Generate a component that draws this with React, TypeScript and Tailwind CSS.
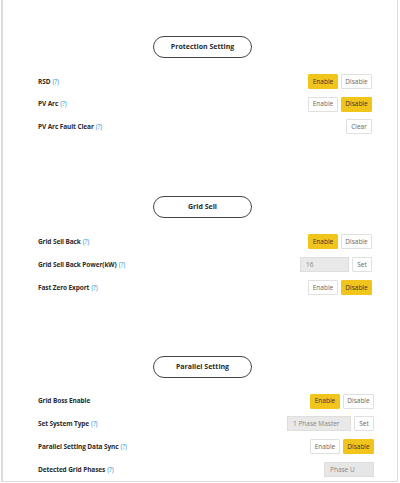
import React from 'react'

type Row =
  | { label: string; help?: boolean; kind: 'toggle'; on: boolean }
  | { label: string; help?: boolean; kind: 'clear' }
  | { label: string; help?: boolean; kind: 'input'; value: string; width: string }
  | { label: string; help?: boolean; kind: 'readonly'; value: string }

interface Section {
  title: string
  right: string
  gap: string
  rows: Row[]
}

const sections: Section[] = [
  {
    title: 'Protection Setting',
    right: 'pr-[25px]',
    gap: '',
    rows: [
      { label: 'RSD', help: true, kind: 'toggle', on: true },
      { label: 'PV Arc', help: true, kind: 'toggle', on: false },
      { label: 'PV Arc Fault Clear', help: true, kind: 'clear' }
    ]
  },
  {
    title: 'Grid Sell',
    right: 'pr-[25px]',
    gap: 'mt-[58px]',
    rows: [
      { label: 'Grid Sell Back', help: true, kind: 'toggle', on: true },
      { label: 'Grid Sell Back Power(kW)', help: true, kind: 'input', value: '16', width: 'w-[49px]' },
      { label: 'Fast Zero Export', help: true, kind: 'toggle', on: false }
    ]
  },
  {
    title: 'Parallel Setting',
    right: 'pr-[23px]',
    gap: 'mt-[57px]',
    rows: [
      { label: 'Grid Boss Enable', kind: 'toggle', on: true },
      { label: 'Set System Type', help: true, kind: 'input', value: '1 Phase Master', width: 'w-[64px]' },
      { label: 'Parallel Setting Data Sync', help: true, kind: 'toggle', on: false },
      { label: 'Detected Grid Phases', help: true, kind: 'readonly', value: 'Phase U' }
    ]
  }
]

const btn = 'h-[15px] flex items-center justify-center border text-[6.5px] rounded-[1px]'
const yellow = 'bg-[#f2c51c] border-[#f2c51c] text-[#333]'
const white = 'bg-white border-[#e0e0e0] text-[#666]'

const Control: React.FC<{ row: Row }> = ({ row }) => {
  if (row.kind === 'toggle') {
    return (
      <div className="flex gap-[3px]">
        <div className={`${btn} w-[30px] ${row.on ? yellow : white}`}>Enable</div>
        <div className={`${btn} w-[31px] ${row.on ? white : yellow}`}>Disable</div>
      </div>
    )
  }
  if (row.kind === 'clear') {
    return <div className={`${btn} w-[26px] ${white}`}>Clear</div>
  }
  if (row.kind === 'input') {
    return (
      <div className="flex gap-[3px]">
        <div className={`h-[15px] ${row.width} flex items-center pl-[5px] bg-[#e9e9e9] border border-[#dedede] text-[6.5px] text-[#888]`}>
          {row.value}
        </div>
        <div className={`${btn} w-[20px] ${white}`}>Set</div>
      </div>
    )
  }
  return (
    <div className="h-[15px] w-[50px] flex items-center pl-[5px] bg-[#e6e6e6] border border-[#dedede] text-[6.5px] text-[#888]">
      {row.value}
    </div>
  )
}

export default function App() {
  return (
    <div className="w-[400px] h-[483px] bg-white overflow-hidden" style={{ fontFamily: '"Open Sans", "Liberation Sans", sans-serif' }}>
      <div className="ml-[1px] w-[397px] h-[482px] border-l-2 border-r border-b border-[#dcdcdc] pt-[36px]">
        {sections.map((s) => (
          <div key={s.title} className={s.gap}>
            <div className="pl-[150px]">
              <div className="w-[99px] h-[22px] rounded-full border-[1.5px] border-[#444] flex items-center justify-center text-[7px] font-bold text-[#2b2b2b]">
                {s.title}
              </div>
            </div>
            <div className={`mt-[12px] pl-[35px] ${s.right}`}>
              {s.rows.map((r) => (
                <div key={r.label} className="h-[22.8px] flex items-center justify-between">
                  <div className="text-[6.5px] font-bold text-[#2b2b2b] tracking-[-0.1px]">
                    {r.label}
                    {r.help && <span className="ml-[2px] font-normal text-[#2a8fd6]">(?)</span>}
                  </div>
                  <Control row={r} />
                </div>
              ))}
            </div>
          </div>
        ))}
      </div>
    </div>
  )
}
